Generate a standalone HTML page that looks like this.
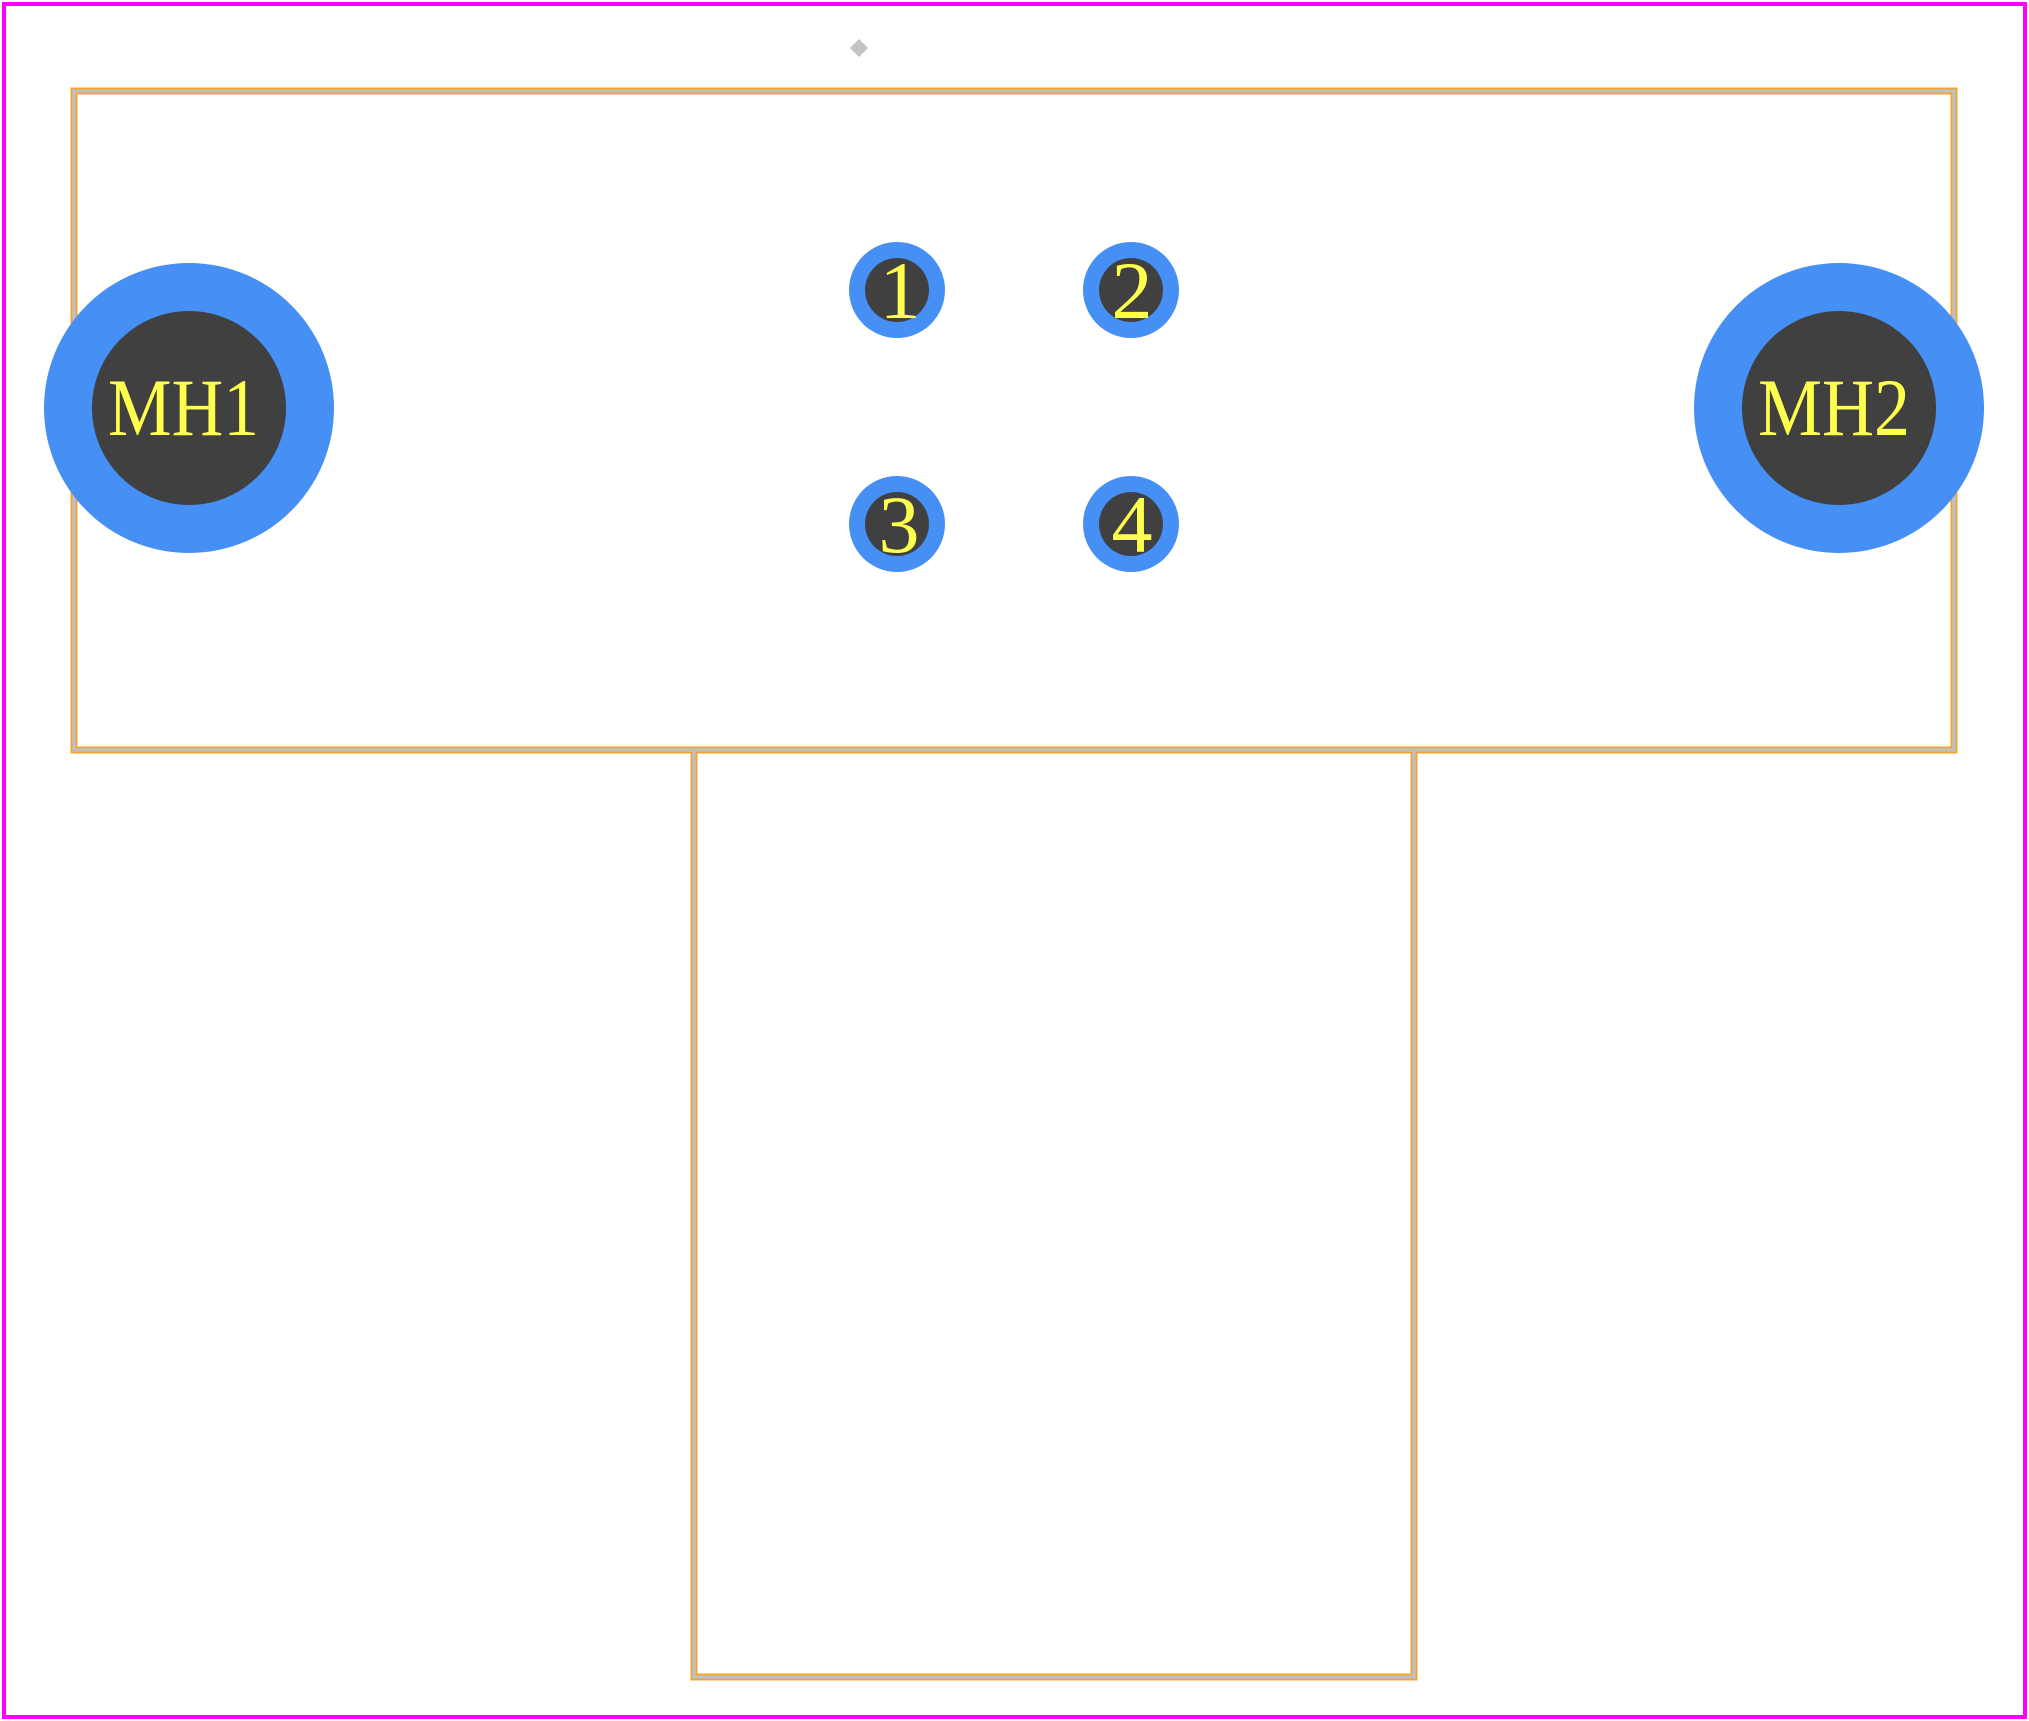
<!DOCTYPE html>
<html><head><meta charset="utf-8"><style>html,body{margin:0;padding:0;background:#fff}svg{display:block}
.t{font-family:"Liberation Serif","DejaVu Serif",serif;}</style></head>
<body>
<svg width="2029" height="1721" viewBox="0 0 2029 1721" xmlns="http://www.w3.org/2000/svg">
<rect width="2029" height="1721" fill="#fff"/>
<rect x="4" y="4" width="2021" height="1713" fill="none" stroke="#ff00ff" stroke-width="4"/>
<g fill="none" stroke-linecap="square">
<g stroke="#f5a32c" stroke-width="7">
<rect x="74" y="91" width="1880" height="659"/>
<polyline points="694,750 694,1677 1414,1677 1414,750"/>
</g>
<g stroke="#c0c0c0" stroke-width="3.5">
<rect x="74" y="91" width="1880" height="659"/>
<polyline points="694,750 694,1677 1414,1677 1414,750"/>
</g>
</g>
<path d="M859 39 L868 48 L859 57 L850 48 Z" fill="#c4c4c4"/>
<g fill="#458ff5">
<circle cx="189" cy="408" r="145"/><circle cx="1839" cy="408" r="145"/>
<circle cx="897" cy="290" r="48"/><circle cx="1131" cy="290" r="48"/>
<circle cx="897" cy="524" r="48"/><circle cx="1131" cy="524" r="48"/>
</g>
<g fill="#404040">
<circle cx="189" cy="408" r="97"/><circle cx="1839" cy="408" r="97"/>
<circle cx="897" cy="290" r="32"/><circle cx="1131" cy="290" r="32"/>
<circle cx="897" cy="524" r="32"/><circle cx="1131" cy="524" r="32"/>
</g>
<g fill="#ffff4d" class="t" font-size="82">
<text x="108" y="435" textLength="151" lengthAdjust="spacingAndGlyphs">MH1</text>
<text x="1758" y="435" textLength="152" lengthAdjust="spacingAndGlyphs">MH2</text>
<text x="900" y="318" text-anchor="middle">1</text>
<text x="1132" y="318" text-anchor="middle">2</text>
<text x="899" y="552" text-anchor="middle">3</text>
<text x="1132" y="552" text-anchor="middle">4</text>
</g>
</svg>
</body></html>
